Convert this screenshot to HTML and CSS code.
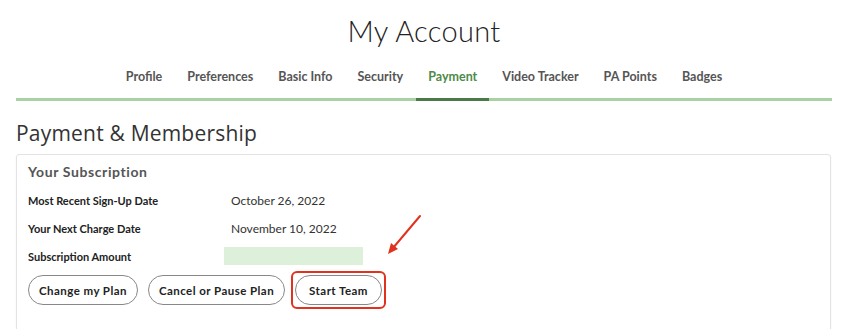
FILE: index.html
```html
<!DOCTYPE html>
<html lang="en">
  <head>
    <meta charset="UTF-8">
    <meta name="viewport" content="width=device-width, initial-scale=1.0">
    <title>My Account</title>
    <link rel="stylesheet" href="styles.css">
  </head>
  <body>
    <h1 class="page-title">My Account</h1>
    <nav class="account-nav">
      <ul>
        <li><a href="#">Profile</a></li>
        <li><a href="#">Preferences</a></li>
        <li><a href="#">Basic Info</a></li>
        <li><a href="#">Security</a></li>
        <li class="active"><a href="#">Payment</a></li>
        <li><a href="#">Video Tracker</a></li>
        <li><a href="#">PA Points</a></li>
        <li><a href="#">Badges</a></li>
      </ul>
    </nav>

    <h2 class="section-title">Payment &amp; Membership</h2>
    <div class="card">
      <h3 class="card-title">Your Subscription</h3>
      <div class="row">
        <span class="label">Most Recent Sign-Up Date</span>
        <span class="value">October 26, 2022</span>
      </div>
      <div class="row">
        <span class="label">Your Next Charge Date</span>
        <span class="value">November 10, 2022</span>
      </div>
      <div class="row">
        <span class="label">Subscription Amount</span>
        <span class="value redacted"></span>
      </div>
      <div class="actions">
        <button type="button" class="pill">Change my Plan</button>
        <button type="button" class="pill">Cancel or Pause Plan</button>
        <span class="highlight">
          <button type="button" class="pill">Start Team</button>
          <!-- annotation arrow -->
          <svg class="arrow" width="40" height="46" viewBox="0 0 40 46">
            <line x1="37" y1="4" x2="10" y2="36" stroke="#e0321e" stroke-width="2" stroke-linecap="round"/>
            <polygon points="5,42 8,31 15,37" fill="#e0321e"/>
          </svg>
        </span>
      </div>
    </div>
  </body>
</html>
```

FILE: styles.css
```css
body {
  margin: 0;
  font-family: Lato, "Open Sans", sans-serif;
  color: #333;
  background: #fff;
  overflow: hidden;
}

.page-title {
  margin: 13px 0 0;
  text-align: center;
  font-family: Lato, sans-serif;
  font-weight: 300;
  font-size: 29px;
  line-height: 36px;
  letter-spacing: 0.3px;
  color: #222;
}

.account-nav {
  margin: 16px 16px 0 16px;
  border-bottom: 3px solid #a9d2a4;
}

.account-nav ul {
  list-style: none;
  margin: 0;
  padding: 0;
  display: flex;
  justify-content: center;
  gap: 1px;
}

.account-nav li {
  padding: 0 12px 12px;
  margin-bottom: -3px;
  border-bottom: 3px solid transparent;
}

.account-nav a {
  font-size: 12.5px;
  font-weight: 700;
  color: #555;
  text-decoration: none;
  line-height: 18px;
}

.account-nav li.active {
  border-bottom-color: #4a7a45;
}

.account-nav li.active a {
  color: #4e8a48;
}

.section-title {
  margin: 20px 16px 0;
  font-family: "Open Sans", sans-serif;
  font-weight: 400;
  font-size: 21px;
  line-height: 24px;
  letter-spacing: 0.2px;
  color: #333;
}

.card {
  margin: 9px 17px 0 16px;
  border: 1px solid #e3e3e3;
  border-radius: 3px;
  box-shadow: 0 1px 2px rgba(0, 0, 0, 0.05);
  padding: 8px 11px 30px;
}

.card-title {
  margin: 0 0 5px;
  font-size: 14px;
  font-weight: 700;
  letter-spacing: 0.6px;
  color: #555;
  line-height: 18px;
}

.row {
  display: flex;
  align-items: center;
  height: 28px;
}

.label {
  width: 203px;
  font-size: 11px;
  font-weight: 700;
  color: #222;
}

.value {
  font-size: 12px;
  color: #333;
}

.value.redacted {
  width: 139px;
  height: 18px;
  margin-left: -7px;
  background: #dcf0da;
}

.actions {
  display: flex;
  align-items: center;
  gap: 10px;
  margin-top: 1px;
}

.pill {
  height: 30px;
  padding: 0 10px;
  border: 1px solid #888;
  border-radius: 15px;
  background: #fff;
  font-family: Lato, sans-serif;
  font-size: 11.5px;
  font-weight: 700;
  letter-spacing: 0.45px;
  color: #222;
}

.highlight {
  position: relative;
  padding: 2px;
  border: 2px solid #e0321e;
  border-radius: 6px;
  display: flex;
  margin-left: -4px;
}

.highlight .pill {
  padding: 0 13px;
}

.arrow {
  position: absolute;
  left: 90px;
  top: -61px;
}
```
